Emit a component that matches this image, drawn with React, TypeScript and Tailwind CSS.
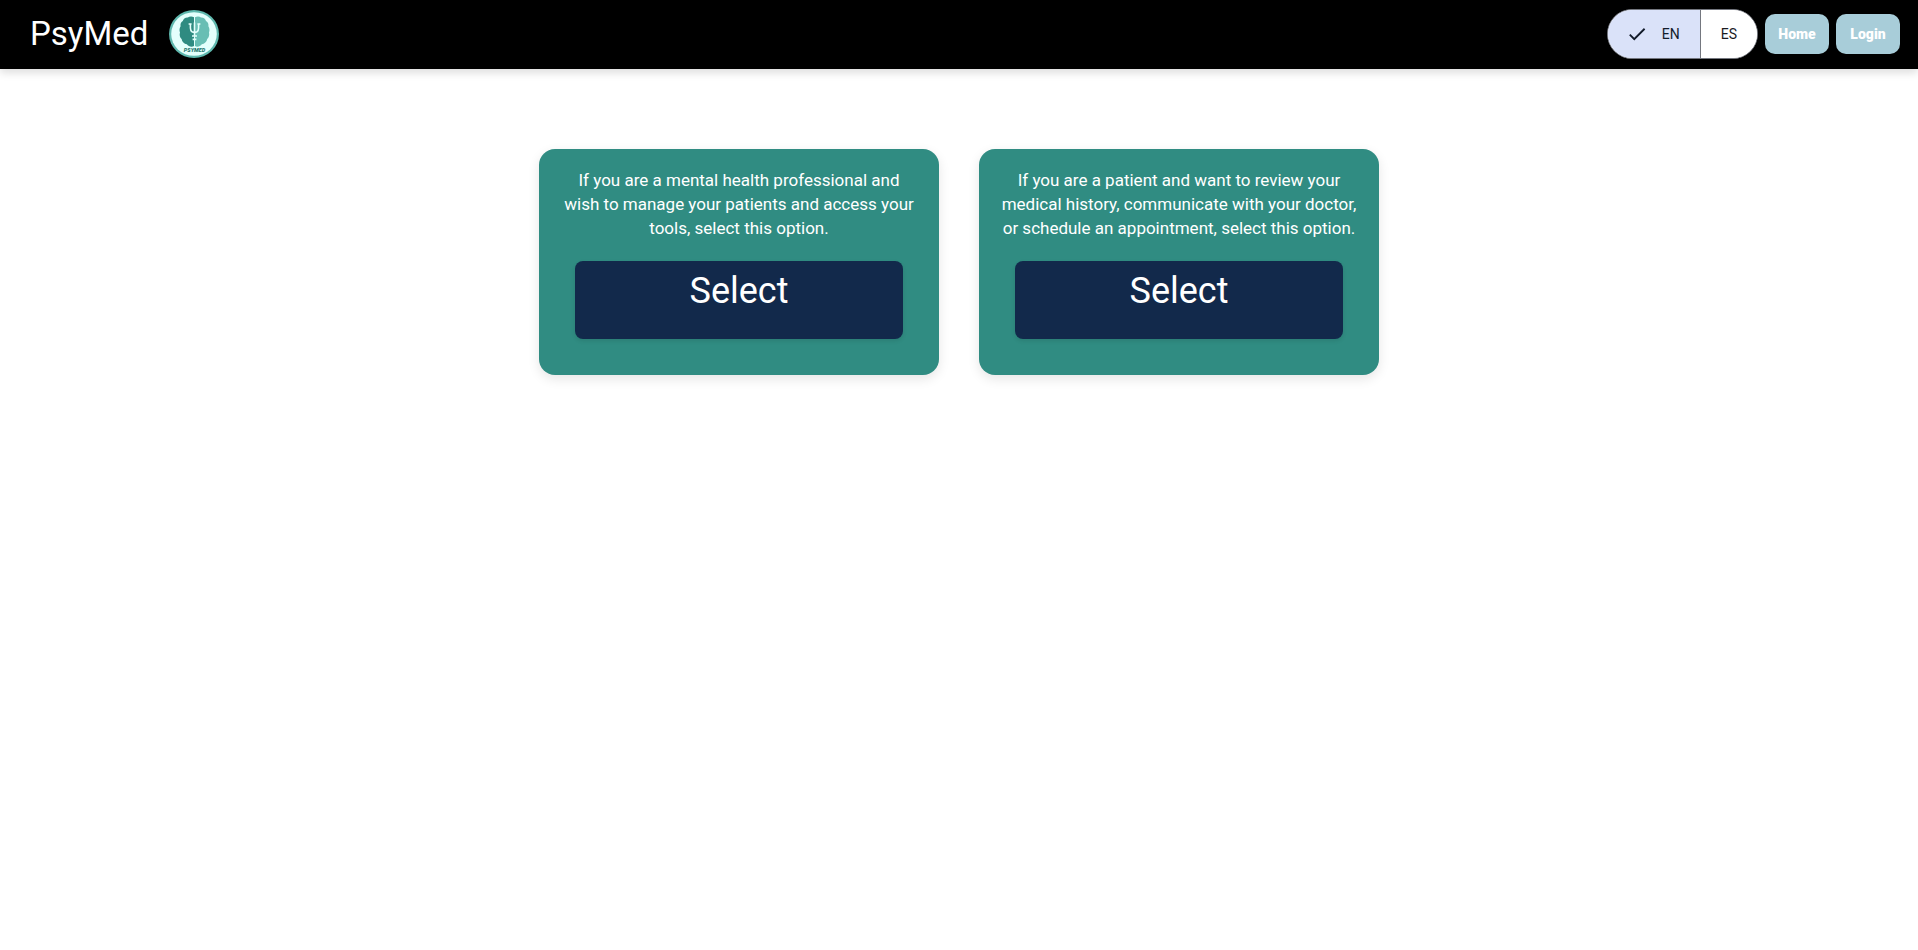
import { useState } from "react";

const options = [
  {
    id: "professional",
    text: "If you are a mental health professional and wish to manage your patients and access your tools, select this option.",
  },
  {
    id: "patient",
    text: "If you are a patient and want to review your medical history, communicate with your doctor, or schedule an appointment, select this option.",
  },
];

function Logo() {
  return (
    <svg viewBox="0 0 50 50" className="size-[50px]" role="img" aria-label="PsyMed logo">
      <ellipse cx="25" cy="25" rx="25" ry="24" fill="#5fb8ae" />
      <ellipse cx="25" cy="25" rx="22.8" ry="21.8" fill="#e4fffc" />
      <path
        d="M25 8.2C23 7 20.4 7.2 18.8 8.4C16.4 8.2 14.2 9.8 13.8 12C11.8 13.2 11.2 15.2 11.6 17.2C10.4 19 10.2 21.4 11 23.4C10.2 25.8 10.8 28.4 12.6 30C13 32.8 15.2 35 17.8 35.2C19.4 37.6 22.6 38.4 25 37Z"
        fill="#2f8b81"
      />
      <path
        d="M26 8.2C28 7 30.6 7.2 32 8.4C34.4 8.2 36.6 9.8 37 12C39 13.2 39.8 15.2 39.4 17.2C40.6 19 40.8 21.4 40 23.4C40.6 25.8 40 28.4 38.2 30C37.8 32.8 35.4 35 32.8 35.2C31.2 37.6 28.2 38.4 26 37Z"
        fill="#68beb4"
      />
      <path
        d="M19.6 15H22.6M28.4 15H31.4M21.4 15.2C21.2 20.6 21.4 23.4 25.5 23.4C29.6 23.4 29.8 20.6 29.6 15.2M25.5 13.6V27M23 27H28M23.6 30.4H27.4"
        fill="none"
        stroke="#e4fffc"
        strokeWidth="1.6"
      />
      <text
        x="25.5"
        y="43.2"
        textAnchor="middle"
        fontFamily="Roboto, sans-serif"
        fontSize="5.5"
        fontStyle="italic"
        fontWeight="900"
        fill="#1f776e"
      >
        PSYMED
      </text>
    </svg>
  );
}

function CheckIcon() {
  return (
    <svg viewBox="0 0 24 24" className="size-[22px]" fill="currentColor" aria-hidden="true">
      <path d="M9 16.17 4.83 12l-1.42 1.41L9 19 21 7l-1.41-1.41z" />
    </svg>
  );
}

function LanguageSwitch() {
  const [language, setLanguage] = useState("EN");
  return (
    <div
      role="group"
      aria-label="Language"
      className="flex h-[50px] overflow-hidden rounded-full border border-[#74777f] bg-white text-sm text-[#1a1b1f]"
    >
      {["EN", "ES"].map((code, index) => (
        <button
          key={code}
          type="button"
          aria-pressed={language === code}
          onClick={() => setLanguage(code)}
          className={`flex items-center gap-3.5 pr-5 ${index > 0 ? "border-l border-[#74777f]" : ""} ${
            language === code ? "bg-[#dae2f9] pl-[18px] text-[#131c2b]" : "bg-white pl-5"
          }`}
        >
          {language === code && <CheckIcon />}
          {code}
        </button>
      ))}
    </div>
  );
}

function NavLink({ href, label }: { href: string; label: string }) {
  return (
    <a
      href={href}
      className="flex h-10 w-16 items-center justify-center rounded-[10px] bg-[#a8cdd9] text-sm font-black text-white"
    >
      {label}
    </a>
  );
}

export default function App() {
  return (
    <div className="min-h-screen bg-white font-[Roboto,sans-serif]">
      <header className="flex items-center justify-between bg-black pt-[9px] pr-[18px] pb-[10px] pl-[30px] shadow-[0_4px_8px_rgba(0,0,0,0.13)]">
        <div className="flex items-center gap-[21px]">
          <h1 className="text-[33px] leading-10 text-white">PsyMed</h1>
          <Logo />
        </div>
        <nav aria-label="Main" className="flex items-center gap-[7px]">
          <LanguageSwitch />
          <NavLink href="#home" label="Home" />
          <NavLink href="#login" label="Login" />
        </nav>
      </header>
      <main className="flex flex-wrap justify-center gap-10 px-5 pt-20">
        {options.map((option) => (
          <section
            key={option.id}
            className="flex w-full max-w-[400px] flex-col rounded-2xl bg-[#308c82] px-5 pt-[19px] pb-9 text-center text-white shadow-[0_4px_12px_rgba(0,0,0,0.1)]"
          >
            <p id={option.id} className="text-[17px] leading-6">
              {option.text}
            </p>
            <button
              type="button"
              aria-describedby={option.id}
              className="mx-4 mt-[21px] rounded-lg bg-[#12294b] px-4 pt-2.5 pb-7 text-4xl shadow-[0_2px_4px_rgba(0,0,0,0.1)]"
            >
              Select
            </button>
          </section>
        ))}
      </main>
    </div>
  );
}
